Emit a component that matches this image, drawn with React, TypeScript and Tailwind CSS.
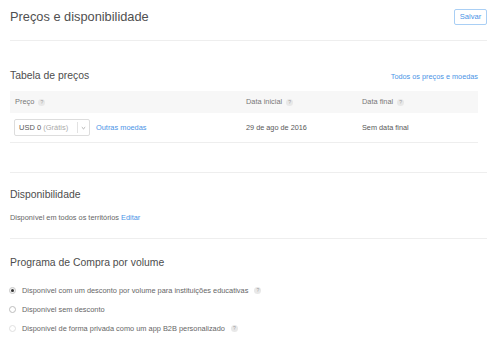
import React from "react";

function Help({ className = "ml-[4px]" }: { className?: string }) {
  return (
    <span
      className={
        className +
        " inline-flex h-[7px] w-[7px] items-center justify-center rounded-full bg-[#e8e8e8] text-[5px] leading-none text-[#a0a0a0]"
      }
    >
      ?
    </span>
  );
}

function Radio({ state }: { state: "on" | "off" | "disabled" }) {
  if (state === "on") {
    return (
      <span className="flex h-[7px] w-[7px] items-center justify-center rounded-full border border-[#c8c8c8] bg-[#f2f2f2]">
        <span className="h-[3px] w-[3px] rounded-full bg-[#333]" />
      </span>
    );
  }
  return (
    <span
      className={
        state === "off"
          ? "h-[7px] w-[7px] rounded-full border border-[#bdbdbd] bg-white"
          : "h-[7px] w-[7px] rounded-full border border-[#e0e0e0] bg-white"
      }
    />
  );
}

export default function App() {
  return (
    <div className="h-[337px] w-[488px] overflow-hidden bg-white font-['Liberation_Sans',Arial,sans-serif] text-[#666]">
      <div className="pl-[10px] pr-[1px]">
        {/* header */}
        <div className="h-[41px] border-b border-[#eeeeee] pt-[9px]">
          <div className="flex h-[16px] items-center justify-between">
            <h1 className="text-[12.8px] leading-[16px] text-[#505050]">Preços e disponibilidade</h1>
            <button className="flex h-[16px] w-[33px] items-center justify-center rounded-[2px] border border-[#a9cff5] bg-white text-[7.6px] leading-none text-[#4b94e6]">
              Salvar
            </button>
          </div>
        </div>

        {/* price table */}
        <div className="border-b border-[#eeeeee] pb-[29px] pr-[9px]">
          <div className="mt-[28px] flex h-[14px] items-baseline justify-between">
            <h2 className="text-[10.4px] leading-[14px] text-[#4d4d4d]">Tabela de preços</h2>
            <a className="text-[7.3px] leading-[14px] text-[#4b94e6]">Todos os preços e moedas</a>
          </div>
          <div className="mt-[8px]">
            <div className="grid h-[22px] grid-cols-[231px_116px_1fr] items-center bg-[#f7f7f7] text-[7.4px] leading-[10px] text-[#777]">
              <div className="flex items-center pl-[5px]">
                Preço
                <Help />
              </div>
              <div className="flex items-center pl-[5px]">
                Data inicial
                <Help />
              </div>
              <div className="flex items-center pl-[5px]">
                Data final
                <Help />
              </div>
            </div>
            <div className="grid h-[30px] grid-cols-[231px_116px_1fr] items-center border-b border-[#eeeeee] text-[7.3px] leading-[10px] text-[#585858]">
              <div className="flex items-center pl-[4px]">
                <div className="flex h-[17px] w-[76px] items-center rounded-[2px] border border-[#dddddd] bg-white">
                  <span className="pl-[4px] text-[7.5px] text-[#585858]">
                    USD 0 <span className="text-[#aaa]">(Grátis)</span>
                  </span>
                  <span className="ml-auto h-[11px] w-px bg-[#e2e2e2]" />
                  <span className="flex w-[11px] items-center justify-center">
                    <svg width="5" height="4" viewBox="0 0 5 4">
                      <path d="M0.8 1.2 L2.5 2.8 L4.2 1.2" fill="none" stroke="#999" strokeWidth="0.8" />
                    </svg>
                  </span>
                </div>
                <a className="ml-[6px] text-[7.4px] text-[#4b94e6]">Outras moedas</a>
              </div>
              <div className="pl-[5px]">29 de ago de 2016</div>
              <div className="pl-[5px]">Sem data final</div>
            </div>
          </div>
        </div>

        {/* availability */}
        <div className="border-b border-[#eeeeee] pb-[15px]">
          <h2 className="mt-[15px] text-[10.4px] leading-[14px] text-[#4d4d4d]">Disponibilidade</h2>
          <p className="mt-[11px] text-[7.35px] leading-[10px] text-[#666]">
            Disponível em todos os territórios <a className="text-[#4b94e6]">Editar</a>
          </p>
        </div>

        {/* volume program */}
        <div>
          <h2 className="mt-[17px] text-[10.4px] leading-[14px] text-[#4d4d4d]">Programa de Compra por volume</h2>
          <div className="mt-[11px] text-[7.4px] leading-[10px] text-[#666]">
            <div className="flex h-[19px] items-center">
              <span className="ml-[-1px] flex w-[13px] items-center">
                <Radio state="on" />
              </span>
              <span>Disponível com um desconto por volume para instituições educativas</span>
              <Help className="ml-[6px]" />
            </div>
            <div className="flex h-[19px] items-center">
              <span className="ml-[-1px] flex w-[13px] items-center">
                <Radio state="off" />
              </span>
              <span>Disponível sem desconto</span>
            </div>
            <div className="flex h-[19px] items-center">
              <span className="ml-[-1px] flex w-[13px] items-center">
                <Radio state="disabled" />
              </span>
              <span>Disponível de forma privada como um app B2B personalizado</span>
              <Help className="ml-[6px]" />
            </div>
          </div>
        </div>
      </div>
    </div>
  );
}
